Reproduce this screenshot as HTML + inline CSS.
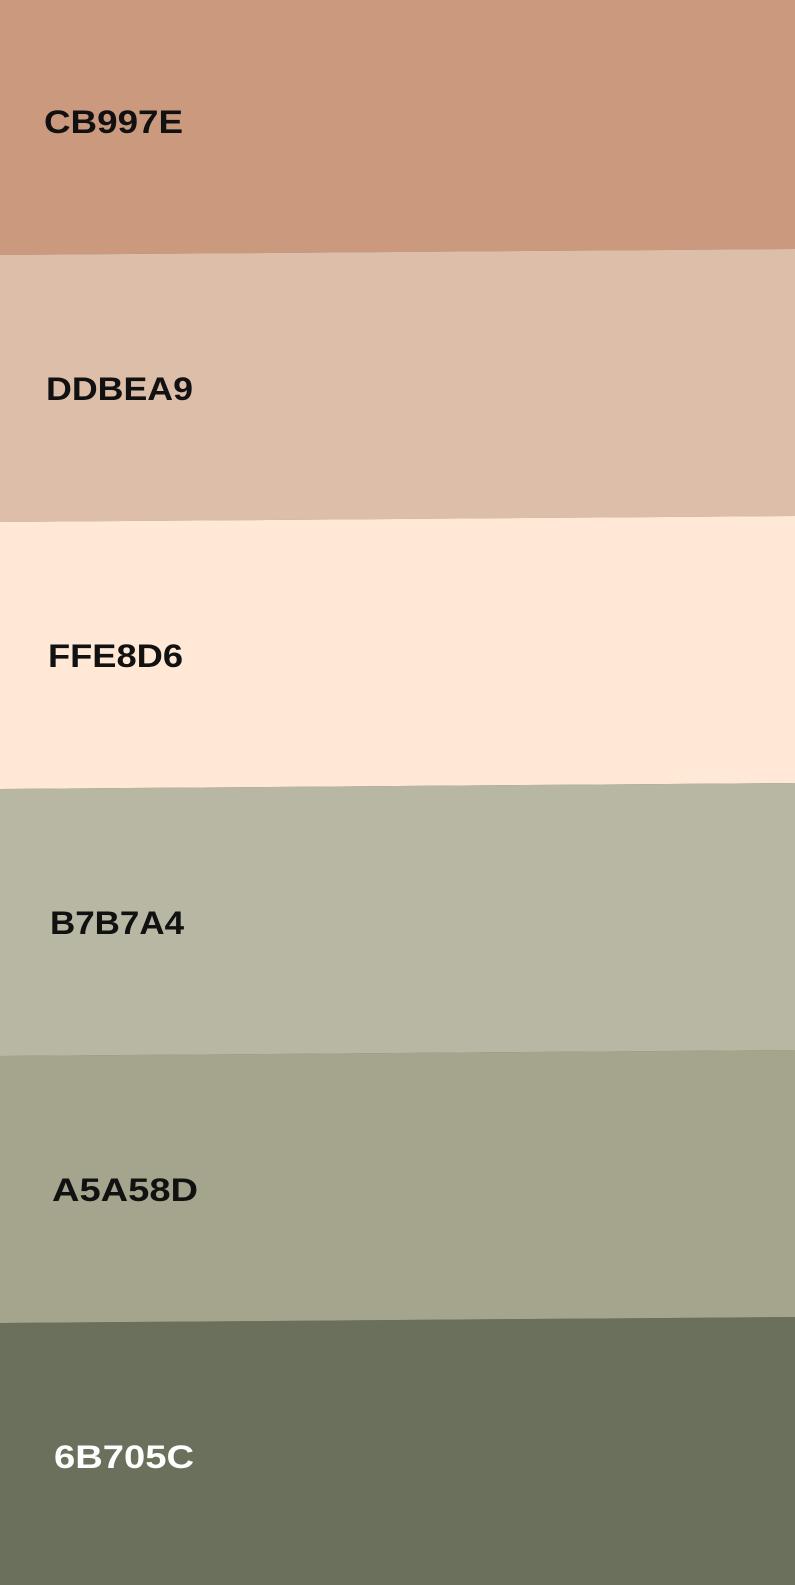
<!DOCTYPE html>
<html><head><meta charset="utf-8"><style>
html,body{margin:0;padding:0;width:795px;height:1585px;overflow:hidden;background:#6B705C}
svg{display:block}
text{font-family:"Liberation Sans",sans-serif;font-weight:bold;font-size:32px}
</style></head><body>
<svg width="795" height="1585" viewBox="0 0 795 1585">
<polygon points="0,0 795,0 795,249 0,255" fill="#CB997E"/>
<polygon points="0,255 795,249 795,516 0,522" fill="#DDBEA9"/>
<polygon points="0,522 795,516 795,783 0,789" fill="#FFE8D6"/>
<polygon points="0,789 795,783 795,1050 0,1056" fill="#B7B7A4"/>
<polygon points="0,1056 795,1050 795,1317 0,1323" fill="#A5A58D"/>
<polygon points="0,1323 795,1317 795,1585 0,1585" fill="#6B705C"/>
<text x="44" y="133" fill="#111" textLength="139" lengthAdjust="spacingAndGlyphs">CB997E</text>
<text x="46" y="400" fill="#111" textLength="147" lengthAdjust="spacingAndGlyphs">DDBEA9</text>
<text x="48" y="667" fill="#111" textLength="135" lengthAdjust="spacingAndGlyphs">FFE8D6</text>
<text x="50" y="934" fill="#111" textLength="134" lengthAdjust="spacingAndGlyphs">B7B7A4</text>
<text x="52" y="1201" fill="#111" textLength="146" lengthAdjust="spacingAndGlyphs">A5A58D</text>
<text x="54" y="1468" fill="#fff" textLength="140" lengthAdjust="spacingAndGlyphs">6B705C</text>
</svg>
</body></html>
